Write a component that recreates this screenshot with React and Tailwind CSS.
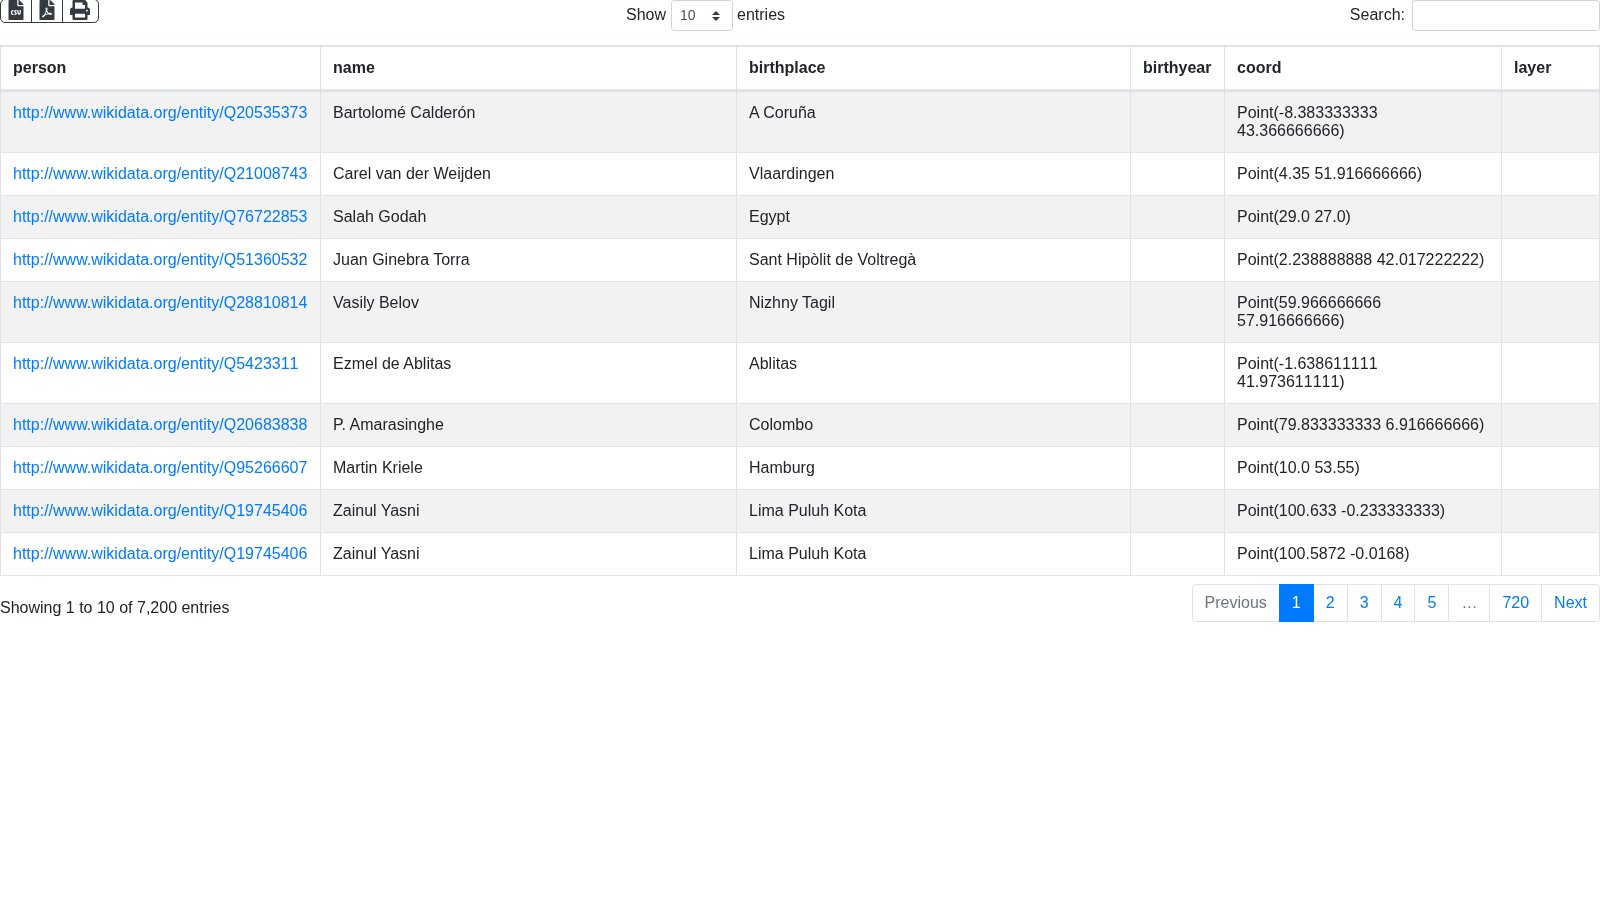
import { FaFileCsv, FaFilePdf, FaPrint } from "react-icons/fa";

const rows = [
  ["http://www.wikidata.org/entity/Q20535373", "Bartolomé Calderón", "A Coruña", "Point(-8.383333333 43.366666666)"],
  ["http://www.wikidata.org/entity/Q21008743", "Carel van der Weijden", "Vlaardingen", "Point(4.35 51.916666666)"],
  ["http://www.wikidata.org/entity/Q76722853", "Salah Godah", "Egypt", "Point(29.0 27.0)"],
  ["http://www.wikidata.org/entity/Q51360532", "Juan Ginebra Torra", "Sant Hipòlit de Voltregà", "Point(2.238888888 42.017222222)"],
  ["http://www.wikidata.org/entity/Q28810814", "Vasily Belov", "Nizhny Tagil", "Point(59.966666666 57.916666666)"],
  ["http://www.wikidata.org/entity/Q5423311", "Ezmel de Ablitas", "Ablitas", "Point(-1.638611111 41.973611111)"],
  ["http://www.wikidata.org/entity/Q20683838", "P. Amarasinghe", "Colombo", "Point(79.833333333 6.916666666)"],
  ["http://www.wikidata.org/entity/Q95266607", "Martin Kriele", "Hamburg", "Point(10.0 53.55)"],
  ["http://www.wikidata.org/entity/Q19745406", "Zainul Yasni", "Lima Puluh Kota", "Point(100.633 -0.233333333)"],
  ["http://www.wikidata.org/entity/Q19745406", "Zainul Yasni", "Lima Puluh Kota", "Point(100.5872 -0.0168)"],
];

const headers = [
  { label: "person", width: "w-[320px]" },
  { label: "name", width: "w-[416px]" },
  { label: "birthplace", width: "w-[394px]" },
  { label: "birthyear", width: "w-[94px]" },
  { label: "coord", width: "w-[277px]" },
  { label: "layer", width: "w-[98px]" },
];

const pages = ["2", "3", "4", "5"];

const cell = "border border-[#dee2e6] p-3 align-top";
const pageLink = "border border-[#dee2e6] -ml-px px-3 py-2 leading-[1.25] text-[#007bff]";

// runs of 1s are set without kerning, the way they come out in the page
const Ones = ({ text }) =>
  text.split(/(1{2,})/).map((part, i) =>
    i % 2 ? (
      <span key={i} className="[font-kerning:none]">{part}</span>
    ) : (
      part
    )
  );

export default function App() {
  return (
    <div className="font-['Liberation_Sans',Arial,sans-serif] text-base text-[#212529] leading-[1.15] min-h-screen [will-change:transform]">
      <div className="flex items-start h-[45px]">
        <div className="w-[626px] shrink-0">
          <div className="inline-flex h-[24px] -mt-px border border-[#343a40] rounded-[5px] overflow-hidden align-top">
            <span className="flex justify-center w-[31px] border-r border-[#343a40]">
              <FaFileCsv className="text-[#343a40] text-[20px]" />
            </span>
            <span className="flex justify-center w-[31px] border-r border-[#343a40]">
              <FaFilePdf className="text-[#343a40] text-[20px]" />
            </span>
            <span className="flex justify-center w-[35px] pr-[2px]">
              <FaPrint className="text-[#343a40] text-[20px]" />
            </span>
          </div>
        </div>
        <div className="flex items-center h-[31px]">
          <span>Show</span>
          <div className="relative ml-[5px] mr-[4px] w-[62px] h-[31px] border border-[#ced4da] rounded-[3.2px] text-sm text-[#495057] pl-2 pb-px flex items-center">
            10
            <svg className="absolute right-[12px] top-[10px]" width="8" height="10" viewBox="0 0 4 5">
              <path fill="#343a40" d="M2 0L0 2h4zm0 5L0 3h4z" />
            </svg>
          </div>
          <span>entries</span>
        </div>
        <div className="ml-auto flex items-center h-[31px]">
          <span className="mr-[7px]">Search:</span>
          <div className="w-[188px] h-[31px] border border-[#ced4da] rounded-[3.2px]" />
        </div>
      </div>
      <table className="w-[1599px] table-fixed border-collapse leading-[18px]">
        <thead>
          <tr>
            {headers.map((h) => (
              <th key={h.label} className={`${cell} ${h.width} text-left border-t-2 border-b-[3px] font-bold`}>
                {h.label}
              </th>
            ))}
          </tr>
        </thead>
        <tbody>
          {rows.map((row, i) => (
            <tr key={i} className="odd:bg-[#f2f2f2]">
              <td className={cell}>
                <a href="#" className="text-[#007bff]"><Ones text={row[0]} /></a>
              </td>
              <td className={cell}>{row[1]}</td>
              <td className={cell}>{row[2]}</td>
              <td className={cell}></td>
              <td className={cell}><Ones text={row[3]} /></td>
              <td className={cell}></td>
            </tr>
          ))}
        </tbody>
      </table>
      <div className="flex justify-between items-start mt-2">
        <div className="pt-[15px]">Showing 1 to 10 of 7,200 entries</div>
        <div className="flex rounded">
          <span className="border border-[#dee2e6] rounded-l px-3 py-2 leading-[1.25] text-[#6c757d]">Previous</span>
          <span className="relative z-10 border border-[#007bff] -ml-px px-3 py-2 leading-[1.25] bg-[#007bff] text-white">1</span>
          {pages.map((p) => (
            <a key={p} href="#" className={pageLink}>{p}</a>
          ))}
          <span className="border border-[#dee2e6] -ml-px px-3 py-2 leading-[1.25] text-[#6c757d]">…</span>
          <a href="#" className={pageLink}>720</a>
          <a href="#" className={`${pageLink} rounded-r`}>Next</a>
        </div>
      </div>
    </div>
  );
}
